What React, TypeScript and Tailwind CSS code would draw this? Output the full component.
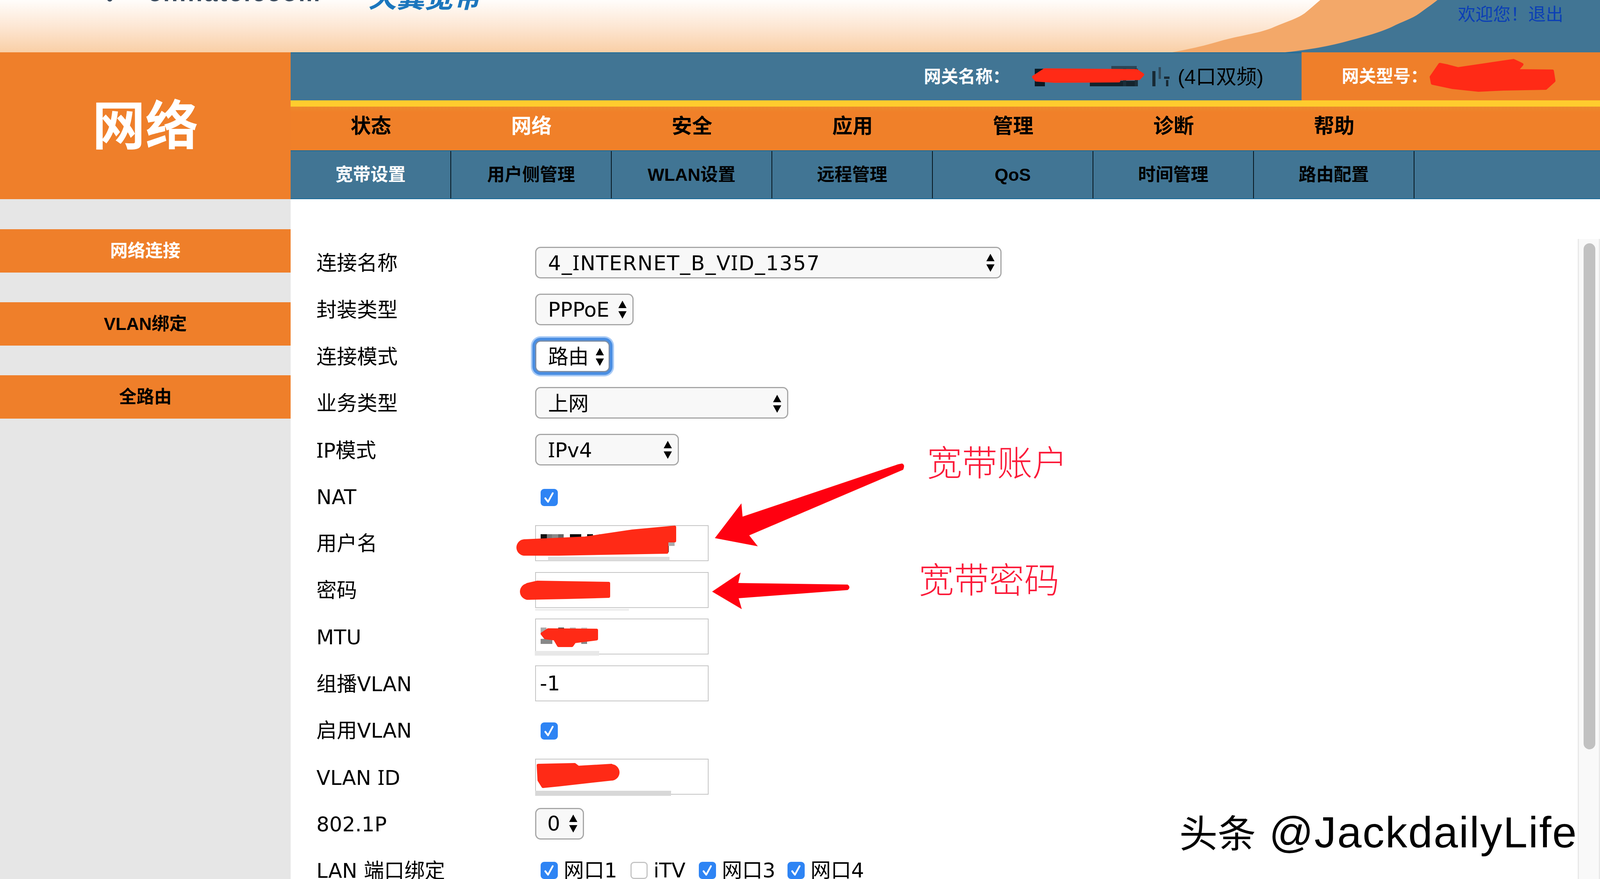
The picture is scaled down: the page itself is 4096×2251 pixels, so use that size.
import type { ReactNode } from "react";

const NAV = ["状态", "网络", "安全", "应用", "管理", "诊断", "帮助"];
const TABS = ["宽带设置", "用户侧管理", "WLAN设置", "远程管理", "QoS", "时间管理", "路由配置"];

// grey blocks of the mosaic under the red smears: x, y, w, h, colour
const MOSAIC: [number, number, number, number, string][] = [
  [2649, 176, 26, 45, "#0c1a24"],
  [2700, 178, 70, 24, "#16262f"],
  [2845, 169, 65, 20, "#2b4656"],
  [2790, 207, 120, 14, "#13232d"],
  [2875, 176, 8, 45, "#1a2e3a"],
  [2905, 176, 8, 45, "#1a2e3a"],
  [2950, 182, 8, 39, "#182a35"],
  [2966, 172, 6, 30, "#30495a"],
  [2980, 196, 14, 6, "#182a35"],
  [2985, 205, 6, 16, "#182a35"],
  [1384, 1368, 16, 14, "#111111"],
  [1400, 1368, 13, 14, "#777777"],
  [1413, 1368, 16, 14, "#8a8a8a"],
  [1429, 1368, 14, 14, "#666666"],
  [1459, 1368, 29, 14, "#0b0b0b"],
  [1503, 1368, 15, 14, "#111111"],
  [1533, 1368, 15, 14, "#aaaaaa"],
  [1707, 1385, 20, 13, "#aaaaaa"],
  [1707, 1398, 5, 16, "#222222"],
  [1403, 1426, 311, 10, "#dddddd"],
  [1370, 1559, 240, 5, "#eeeeee"],
  [1384, 1607, 15, 14, "#aaaaaa"],
  [1429, 1607, 15, 14, "#555555"],
  [1459, 1607, 15, 14, "#bbbbbb"],
  [1488, 1607, 15, 14, "#cccccc"],
  [1384, 1636, 30, 13, "#888888"],
  [1488, 1636, 15, 13, "#888888"],
  [1369, 1667, 165, 12, "#e8e8e8"],
  [1370, 2025, 348, 13, "#d8d8d8"],
];

const SMEARS = [
  "2646,197 2674,179 2910,181 2925,191 2916,201 2864,202 2864,207 2700,208 2653,205",
  "3664,197 3686,165 3706,169 3733,176 3875,155 3896,165 3882,181 3974,182 3978,207 3957,226 3849,228 3785,231 3719,224 3667,213",
  "1343,1385 1498,1378 1619,1360 1727,1350 1727,1385 1707,1385 1707,1414 1430,1419 1343,1419",
  "1350,1497 1376,1491 1558,1494 1558,1527 1450,1530 1350,1532",
  "1388,1623 1403,1613 1527,1614 1527,1636 1471,1643 1464,1653 1430,1653 1420,1636 1396,1633",
  "1378,1960 1471,1958 1480,1965 1565,1960 1565,1995 1430,2010 1390,2014 1380,1998",
];

// Verdana's capital I has serifs, DejaVu's has none, so the I's borrow Noto's
function Verdanaish({ text }: { text: string }) {
  return (
    <>
      {text.split(/(I)/).map((part, i) =>
        part === "I" ? (
          <span key={i} className="font-['Noto_Sans']">
            I
          </span>
        ) : (
          part
        )
      )}
    </>
  );
}

function Arrows() {
  return (
    <svg viewBox="0 0 27 46" className="w-[27px] h-[46px] shrink-0" fill="#000">
      <path d="M13.5 0 L24 19 L3 19 Z" />
      <path d="M13.5 46 L24 27 L3 27 Z" />
    </svg>
  );
}

function Select({
  width,
  children,
  focused = false,
  className = "",
}: {
  width: string;
  children: ReactNode;
  focused?: boolean;
  className?: string;
}) {
  return (
    <div
      className={`${width} h-[81px] flex items-center justify-between pl-[30px] pr-[12px] rounded-[14px] border-[3px] whitespace-nowrap ${
        focused
          ? "bg-white border-[#7d8ea6] shadow-[0_0_0_7px_#4a8ee2,0_0_0_11px_#a9cbf6]"
          : "bg-[#f8f8f8] border-[#a6a6a6]"
      } ${className}`}
    >
      <span>{children}</span>
      <Arrows />
    </div>
  );
}

function Check({ checked = true }: { checked?: boolean }) {
  if (!checked) {
    return <div className="w-[44px] h-[44px] shrink-0 rounded-[9px] border-[3px] border-[#c4c4c4] bg-white" />;
  }
  return (
    <div className="w-[44px] h-[44px] shrink-0 rounded-[9px] bg-[#2e84f4] flex items-center justify-center">
      <svg viewBox="0 0 44 44" className="w-[44px] h-[44px]" fill="none">
        <path d="M12 24 L19 33 L31 11" stroke="#fff" strokeWidth="4.5" strokeLinecap="round" strokeLinejoin="round" />
      </svg>
    </div>
  );
}

function Input({ value = "" }: { value?: string }) {
  return (
    <input
      readOnly
      value={value}
      className="w-[444px] h-[92px] border-2 border-[#c4c4c4] bg-white pl-[10px] outline-none"
    />
  );
}

function Row({ label, children }: { label: ReactNode; children: ReactNode }) {
  return (
    <div className="flex items-center h-[119.7px]">
      <div className="w-[560px] shrink-0 pt-[3px]">{label}</div>
      {children}
    </div>
  );
}

function PortCheck({ label, checked, className }: { label: string; checked?: boolean; className: string }) {
  return (
    <div className={`flex items-center gap-[15px] ${className}`}>
      <Check checked={checked} />
      <span>{label}</span>
    </div>
  );
}

export default function App() {
  return (
    <div className="relative w-[4096px] h-[2251px] overflow-hidden bg-white text-black text-[52px] leading-none font-['DejaVu_Sans','Noto_Sans_CJK_SC',sans-serif]">
      {/* banner, only the lower edge of the logo is in the picture */}
      <header className="relative h-[134px] overflow-hidden bg-gradient-to-b from-[#fffdfb] via-[#fde7d4] to-[#f9cfa6]">
        <div className="absolute left-[274px] top-[-10px] w-[14px] h-[14px] rounded-full bg-[#3a4a5c]" />
        <span className="absolute left-[379px] top-[-49px] text-[62px] tracking-[4px] font-bold text-[#3a4a5c] font-['Liberation_Sans',sans-serif]">
          chinatelecom
        </span>
        <span className="absolute left-[943px] top-[-48px] text-[72px] font-bold italic text-[#1b76bd] font-['Noto_Sans_CJK_SC',sans-serif]">
          天翼宽带
        </span>
        <svg viewBox="0 0 4096 134" className="absolute inset-0 w-full h-full">
          <path d="M3001 134 C3055 124 3095 114 3131 103 C3180 90 3230 84 3262 69 C3295 55 3320 48 3340 34 C3355 22 3368 10 3380 0 L4096 0 L4096 134 Z" fill="#f3a869" />
          <path d="M3290 134 C3330 130 3400 120 3458 103 C3500 92 3535 82 3563 69 C3590 55 3615 48 3634 34 C3650 22 3668 10 3680 0 L4096 0 L4096 134 Z" fill="#417594" />
        </svg>
        <div className="absolute left-[3732px] top-[15px] text-[45px] text-[#0b3fb5] font-['Liberation_Sans','Noto_Sans_CJK_SC',sans-serif] whitespace-nowrap">
          欢迎您！退出
        </div>
      </header>

      <div className="flex h-[2117px]">
        {/* left column */}
        <aside className="w-[744px] shrink-0 bg-[#e6e6e6] font-['Liberation_Sans','Noto_Sans_CJK_SC',sans-serif] font-bold">
          <div className="h-[376px] bg-[#ef7f2a] flex items-center justify-center pt-[4px] text-[136px] text-white">网络</div>
          <div className="flex flex-col gap-[76px] pt-[77px] text-[45px]">
            <div className="h-[111px] bg-[#ef7f2a] flex items-center justify-center text-white">网络连接</div>
            <div className="h-[111px] bg-[#ef7f2a] flex items-center justify-center">VLAN绑定</div>
            <div className="h-[111px] bg-[#ef7f2a] flex items-center justify-center">全路由</div>
          </div>
        </aside>

        <div className="flex-1 min-w-0 flex flex-col">
          {/* gateway info */}
          <div className="h-[123px] flex bg-[#417594] border-t-2 border-[#15699a] font-['Liberation_Sans','Noto_Sans_CJK_SC',sans-serif]">
            <div className="w-[2588px] flex items-center pl-[1621px] whitespace-nowrap">
              <span className="w-[220px] text-[44px] font-bold text-white">网关名称：</span>
              <span className="ml-[430px] text-[52px]">(4口双频)</span>
            </div>
            <div className="flex-1 -mt-[2px] bg-[#ef7f2a] flex items-center pl-[103px]">
              <span className="text-[44px] font-bold text-white">网关型号：</span>
            </div>
          </div>
          <div className="h-[16px] bg-[#ffcc2e]" />

          {/* main nav */}
          <nav className="h-[112px] flex bg-[#f08029] bg-gradient-to-b from-[#ec8a2c] to-[#f08029] to-[12%] text-[52px] font-bold font-['Liberation_Sans','Noto_Sans_CJK_SC',sans-serif]">
            {NAV.map((item) => (
              <div key={item} className={`w-[411px] flex items-center justify-center pb-[12px] ${item === "网络" ? "text-white" : ""}`}>
                {item}
              </div>
            ))}
          </nav>

          {/* sub nav */}
          <div className="h-[125px] flex bg-[#417594] border-y-2 border-[#15699a] text-[45px] font-bold font-['Liberation_Sans','Noto_Sans_CJK_SC',sans-serif]">
            {TABS.map((item, i) => (
              <div key={item} className={`w-[411px] flex items-center justify-center border-r-2 border-[#06141c] ${i === 0 ? "text-white" : ""}`}>
                {item}
              </div>
            ))}
          </div>

          {/* form */}
          <main className="flex-1 min-h-0 flex overflow-hidden">
            <div className="flex-1 pl-[66px] pt-[103px]">
              <Row label="连接名称">
                <Select width="w-[1194px]" className="tracking-[1.8px]">
                  <Verdanaish text="4_INTERNET_B_VID_1357" />
                </Select>
              </Row>
              <Row label="封装类型">
                <Select width="w-[252px]">PPPoE</Select>
              </Row>
              <Row label="连接模式">
                <Select width="w-[191px]" focused className="!pr-[9px] pt-[4px]">
                  路由
                </Select>
              </Row>
              <Row label="业务类型">
                <Select width="w-[648px]" className="pt-[4px]">
                  上网
                </Select>
              </Row>
              <Row label={<><Verdanaish text="IP" />模式</>}>
                <Select width="w-[368px]">
                  <Verdanaish text="IPv4" />
                </Select>
              </Row>
              <Row label="NAT">
                <div className="pl-[14px] pt-[5px]">
                  <Check />
                </div>
              </Row>
              <Row label="用户名">
                <Input />
              </Row>
              <Row label="密码">
                <Input />
              </Row>
              <Row label="MTU">
                <Input />
              </Row>
              <Row label="组播VLAN">
                <Input value="-1" />
              </Row>
              <Row label="启用VLAN">
                <div className="pl-[14px] pt-[5px]">
                  <Check />
                </div>
              </Row>
              <Row label={<>VLAN <Verdanaish text="ID" /></>}>
                <Input />
              </Row>
              <Row label="802.1P">
                <Select width="w-[125px]" className="!pl-[28px] !pr-[11px]">
                  0
                </Select>
              </Row>
              <Row label="LAN 端口绑定">
                <div className="flex pl-[14px]">
                  <PortCheck label="网口1" className="mr-[34px]" />
                  <PortCheck label="iTV" checked={false} className="mr-[34px]" />
                  <PortCheck label="网口3" className="mr-[31px]" />
                  <PortCheck label="网口4" className="" />
                </div>
              </Row>
            </div>
            {/* browser scrollbar */}
            <div className="w-[57px] shrink-0 mt-[102px] pt-[11px] bg-[#f9f9f9] border-l-[3px] border-r-[3px] border-[#e8e8e8]">
              <div className="w-[30px] h-[1296px] ml-[12px] rounded-[15px] bg-[#c1c1c1]" />
            </div>
          </main>
        </div>
      </div>

      {/* red marks and arrows someone painted on the screenshot */}
      <svg viewBox="0 0 4096 2251" className="absolute inset-0 w-full h-full pointer-events-none">
        {MOSAIC.map(([x, y, w, h, c], i) => (
          <rect key={i} x={x} y={y} width={w} height={h} fill={c} />
        ))}
        {SMEARS.map((points, i) => (
          <polygon key={i} points={points} fill="#ff2a16" stroke="#ff2a16" strokeWidth="8" strokeLinejoin="round" />
        ))}
        <circle cx="1343" cy="1402" r="21" fill="#ff2a16" />
        <circle cx="1352" cy="1515" r="21" fill="#ff2a16" />
        <circle cx="1565" cy="1978" r="21" fill="#ff2a16" />
        <path d="M2299 1189 L1901 1323 L1898 1289 L1830 1378 L1940 1399 L1918 1371 L2312 1203 Q2318 1190 2309 1187 Z" fill="#ff0010" />
        <path d="M1823 1515 L1896 1466 L1890 1493 L2170 1497 Q2179 1504 2170 1511 L1891 1532 L1899 1560 Z" fill="#ff0010" />
      </svg>

      <div className="absolute left-[2373px] top-[1134px] text-[90px] text-[#fb1b3a] font-['Noto_Sans_CJK_SC',sans-serif] font-light">
        宽带账户
      </div>
      <div className="absolute left-[2352px] top-[1434px] text-[90px] text-[#fb1b3a] font-['Noto_Sans_CJK_SC',sans-serif] font-light">
        宽带密码
      </div>

      {/* watermark */}
      <div className="absolute left-[3019px] top-[2076px] whitespace-nowrap text-[112px] tracking-[2.5px] font-['Liberation_Sans','Noto_Sans_CJK_SC',sans-serif]">
        <span className="text-[98px] tracking-normal">头条</span> @JackdailyLife
      </div>
      <div className="absolute left-[3060px] top-[2238px] whitespace-nowrap text-[108px] tracking-[2.5px] font-['Liberation_Sans','Noto_Sans_CJK_SC',sans-serif]">
        <span className="text-[88px] tracking-normal">头条</span> @JackdailyLife
      </div>
    </div>
  );
}
